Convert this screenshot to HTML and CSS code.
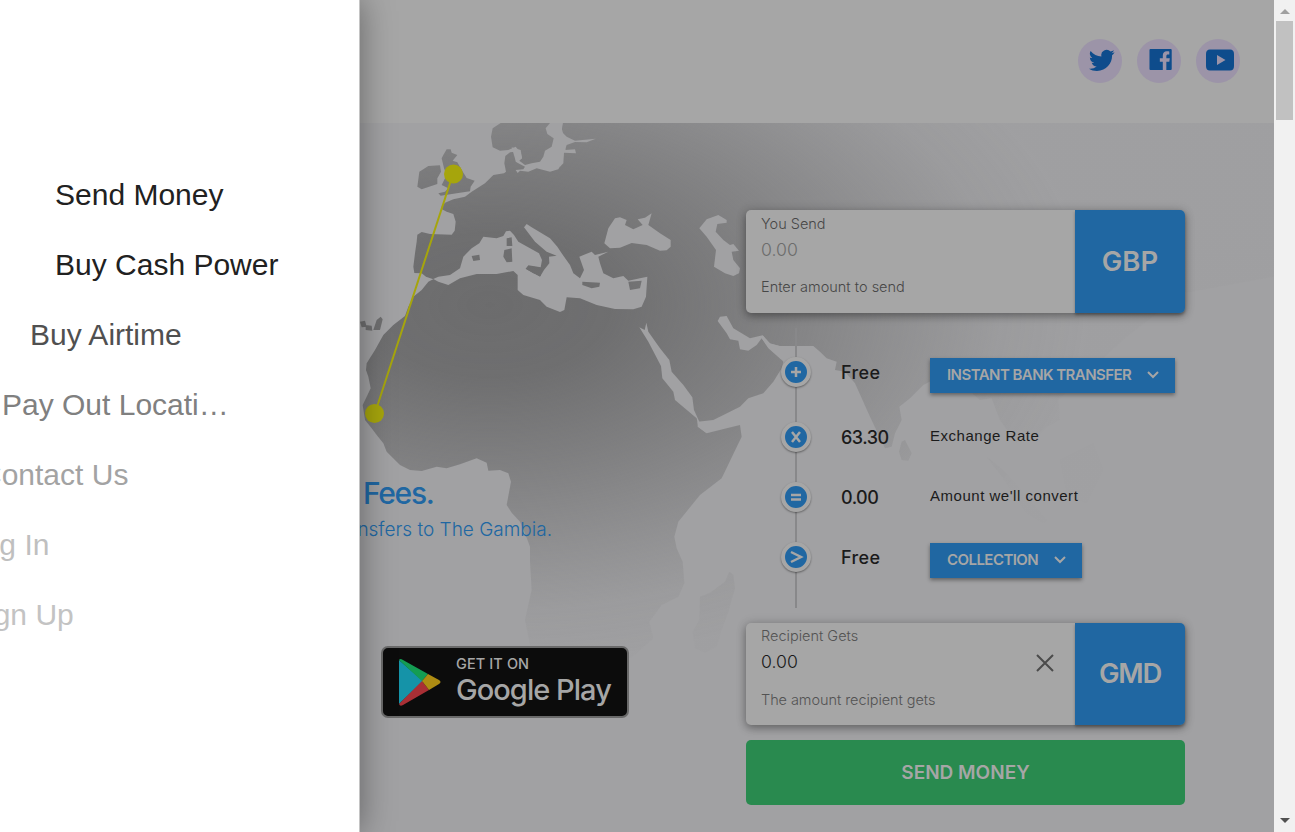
FILE: index.html
```html
<!DOCTYPE html>
<html lang="en">
<head>
<meta charset="utf-8">
<title>Send Money</title>
<link rel="stylesheet" href="styles.css">
</head>
<body>
<div class="page">
  <header class="header">
    <a class="social"><svg width="26" height="26" viewBox="0 0 24 24"><path d="M23.6 4.9c-.9.4-1.800.6-2.800.8 1-.6 1.800-1.600 2.200-2.700-1 .6-2 1-3.100 1.200a4.900 4.900 0 0 0-8.400 4.500C7.500 8.500 3.900 6.600 1.500 3.600a4.900 4.900 0 0 0 1.500 6.600c-.8 0-1.600-.2-2.200-.6 0 2.300 1.600 4.400 3.900 4.900-.7.200-1.500.2-2.200.1.600 2 2.400 3.400 4.600 3.400A9.900 9.900 0 0 1-.2 20c2.200 1.400 4.800 2.200 7.500 2.200 9.100 0 14.300-7.700 14-14.600.9-.700 1.700-1.600 2.300-2.700z"/></svg></a>
    <a class="social"><svg width="23" height="23" viewBox="0 0 24 24"><path fill-rule="evenodd" d="M1.500 1h21.200c.6 0 1 .4 1 1v20c0 .6-.4 1-1 1H18.100v-8.600h3.100l.5-3.600h-3.600V8.500c0-1 .5-1.700 1.800-1.700h1.300V3.700c-.5-.1-1.500-.2-2.600-.2-2.800 0-4.200 1.700-4.200 4.700v2.600h-3.100v3.600h3.100V23H1.500c-.6 0-1-.4-1-1V2c0-.6.400-1 1-1z"/></svg></a>
    <a class="social"><svg width="30" height="24" viewBox="0 0 30 24"><path fill-rule="evenodd" d="M5 1.500h20q4 0 4 4.500v12q0 4.500-4 4.500H5q-4 0-4-4.500V6q0-4.500 4-4.500zM12 7v10l8.500-5z"/></svg></a>
  </header>
  <main class="hero">
    <svg class="map" viewBox="0 123 1274 709" width="1274" height="709">
      <defs>
        <radialGradient id="land" gradientUnits="userSpaceOnUse" cx="0" cy="0" r="1" gradientTransform="translate(490 305) scale(600 360)">
          <stop offset="0" stop-color="#6c6c6d"/>
          <stop offset=".2" stop-color="#6c6c6d" stop-opacity=".95"/>
          <stop offset=".45" stop-color="#6c6c6d" stop-opacity=".63"/>
          <stop offset=".7" stop-color="#6c6c6d" stop-opacity=".29"/>
          <stop offset=".85" stop-color="#6c6c6d" stop-opacity=".1"/>
          <stop offset="1" stop-color="#6c6c6d" stop-opacity=".02"/>
        </radialGradient>
        <mask id="coast" maskUnits="userSpaceOnUse" x="0" y="123" width="1274" height="709">
          <g transform="translate(350 110) scale(.33333)" fill="#fff">
            <!-- Europe -->
            <path d="M638 39 635 55 642 80 660 95 645 105 647 122 640 130 638 155 625 178 600 185 580 180 560 175 535 185 510 182 503 189 497 180 520 178 525 170 505 160 497 155 497 125 480 127 466 138 463 160 468 185 462 190 430 195 405 220 365 245 345 260 310 268 285 278 275 290 276 298 290 305 310 312 317 335 314 362 305 374 240 372 215 366 202 374 200 395 195 430 190 470 193 489 215 490 228 500 250 508 330 560 800 600 800 39z"/>
            <!-- Scandinavia -->
            <path d="M452 39 428 55 423 80 428 112 450 122 475 120 497 110 512 128 516 145 508 152 525 165 545 160 570 155 580 140 585 122 605 110 611 85 592 72 587 55 600 39z"/>
            <!-- Britain and Ireland -->
            <path d="M290 118 280 135 275 145 282 175 290 195 275 225 295 235 285 245 265 250 272 257 320 250 360 244 362 230 374 212 350 204 335 180 322 157 308 152 322 135 305 128 302 118zM235 168 270 166 273 185 262 205 262 222 215 238 202 230 208 185z"/>
          </g>
          <g transform="translate(350 310) scale(.33333)" fill="#fff">
            <!-- Africa and Asia -->
            <path d="M245-90 235-85 215-60 190-40 175-10 165 18 130 45 100 75 75 120 50 160 48 180 55 200 62 235 50 260 38 285 45 330 65 355 80 375 100 400 110 425 150 465 180 480 215 483 260 470 290 475 330 463 380 445 410 458 415 482 450 480 475 490 483 515 470 585 485 608 510 635 525 670 540 710 540 755 545 840 525 930 560 1100 700 1150 860 1030 910 985 898 935 935 885 985 860 1003 820 998 755 980 715 973 680 985 635 1050 555 1115 505 1175 380 1170 345 1130 355 1070 370 1043 350 1043 335 1090 330 1170 290 1195 265 1240 250 1270 215 1295 175 1300 155 1275 125 1255 112 1235 85 1240 78 1255 100 1290 108 1390 108 1410 125 1430 145 1460 155 1455 180 1485 185 1515 220 1560 320 1605 415 1625 410 1635 370 1655 330 1648 290 1680 265 1720 225 1760 205 1850 235 1890 270 1925 265 1950 330 2000 400 2010 360 2060 380 2090 350 2130 330 2125 270 2200 200 2330 80 2500-50 2772-100 2772-561 700-561 700-300z"/>
            <!-- Islands -->
            <path d="M30 35 45 32 50 50 35 52zM47 45 65 47 67 62 47 60zM70 60 80 30 92 20 98 28 90 60zM1665 390 1685 430 1675 452 1655 450 1647 425 1655 395zM1138 785 1150 795 1155 835 1135 905 1115 960 1100 1010 1065 1028 1035 1015 1028 965 1048 930 1050 860 1080 848 1125 815z"/>
            <path fill="#999" d="M1910 440 1960 480 2030 560 2090 630 2080 640 2030 610 1970 520zM2130 450 2230 400 2260 480 2210 580 2150 550z"/>
          </g>
          <g transform="translate(350 110) scale(.33333)" fill="#000">
            <!-- Mediterranean -->
            <path d="M250 507 265 500 300 495 330 475 340 440 365 415 388 400 400 380 440 385 460 378 468 364 480 362 492 375 505 395 540 415 567 430 576 450 572 472 535 466 527 476 570 500 582 480 598 460 597 440 620 437 590 425 555 395 522 352 530 342 545 352 600 385 622 410 635 430 660 465 670 490 690 505 702 480 688 440 725 425 735 435 775 425 745 440 750 460 760 490 790 505 820 498 835 512 870 505 892 500 888 560 875 590 850 598 795 597 740 585 690 565 650 562 643 600 630 606 590 590 570 570 520 555 503 540 503 495 490 483 440 492 380 492 330 505 295 525 265 515z"/>
            <path d="M485 112 512 120 516 145 497 152z"/>
          </g>
          <g transform="translate(350 110) scale(.33333)" fill="#fff">
            <path d="M470 385 485 382 487 408 470 408zM463 420 485 415 487 455 470 457 460 440zM365 438 388 434 390 450 370 453zM527 476 540 468 574 474 572 498 550 490zM697 515 750 518 748 530 725 535 697 525zM835 515 875 512 870 535 840 540z"/>
          </g>
          <g transform="translate(560 110) scale(.33333)" fill="#000">
            <!-- Gulf of Finland, Black Sea, Caspian -->
            <path d="M0 39 8 39 5 65 20 80 45 92 107 86 80 97 45 96 20 105 15 120 45 118 48 130 12 128 10 160 0 170zM180 322 200 330 195 345 220 358 248 345 233 328 255 323 275 310 265 345 300 370 332 390 332 410 320 421 300 422 260 405 215 399 180 413 150 415 133 400 145 355 165 325zM475 315 500 330 500 338 472 342 467 365 490 390 510 405 520 402 537 422 515 425 520 450 540 475 537 490 520 498 495 490 462 470 468 420 440 380 418 355 440 328z"/>
          </g>
          <g transform="translate(560 310) scale(.33333)" fill="#000">
            <!-- Red Sea and Persian Gulf -->
            <path d="M238 52 254 60 259 38 265 65 300 115 328 150 335 185 370 225 397 262 402 300 418 335 440 370 415 350 410 325 345 270 340 245 307 205 303 168 265 95zM480 20 500 18 520 55 570 85 608 76 630 100 665 110 665 150 625 115 605 85 590 105 565 122 540 118 535 92 510 88 500 70 473 33z"/>
          </g>
        </mask>
      </defs>
      <rect x="340" y="123" width="934" height="709" fill="url(#land)" mask="url(#coast)"/>
      <path d="M453 174 375 413" stroke="#a6a50c" stroke-width="2"/>
      <circle cx="453.500" cy="174" r="9.500" fill="#a6a50c"/>
      <circle cx="374.500" cy="413.500" r="9.500" fill="#a6a50c"/>
    </svg>
    <section class="intro">
      <h1>Fees.</h1>
      <p>Transfers to The Gambia.</p>
      <a class="play">
        <svg width="44" height="48" viewBox="0 0 44 48"><path fill="#1593a8" d="M1 2v44l24-23z"/><path fill="#149d53" d="M1 2q1-2 4 0l25 14-6 7z"/><path fill="#a92f35" d="M1 46q1 3 4 1l26-15-7-9z"/><path fill="#ae8c13" d="M30 16l11 6q3 2 0 4l-10 6-7-9z"/></svg>
        <span class="play-text"><small>GET IT ON</small><b>Google Play</b></span>
      </a>
    </section>
    <section class="calc">
      <div class="card send">
        <div class="field"><label>You Send</label><span class="amount muted">0.00</span><span class="hint">Enter amount to send</span></div>
        <div class="currency"><span class="gbp">GBP</span></div>
      </div>
      <div class="steps">
        <div class="step first"><i><svg viewBox="0 0 22 22"><path d="M11 6v10M6 11h10"/></svg></i><b class="free">Free</b><button class="bank"><span>INSTANT BANK TRANSFER</span><svg width="12" height="8" viewBox="0 0 12 8"><path d="M1 1l5 5 5-5"/></svg></button></div>
        <div class="step"><i><svg viewBox="0 0 22 22"><path d="M7 6l8 10M15 6L7 16"/></svg></i><b>63.30</b><span class="note">Exchange Rate</span></div>
        <div class="step"><i><svg viewBox="0 0 22 22"><path d="M6 9h10M6 13.500h10"/></svg></i><b>0.00</b><span class="note">Amount we'll convert</span></div>
        <div class="step"><i><svg viewBox="0 0 22 22"><path d="M6 6l10 5-10 5"/></svg></i><b class="free">Free</b><button class="coll"><span>COLLECTION</span><svg width="12" height="8" viewBox="0 0 12 8"><path d="M1 1l5 5 5-5"/></svg></button></div>
      </div>
      <div class="card receive">
        <div class="field"><label class="dim">Recipient Gets</label><span class="amount">0.00</span><span class="hint dim">The amount recipient gets</span></div>
        <svg class="clear" width="18" height="18" viewBox="0 0 18 18"><path d="M1 1l16 16M17 1L1 17"/></svg>
        <div class="currency"><span>GMD</span></div>
      </div>
      <button class="submit"><span>SEND MONEY</span></button>
    </section>
  </main>
  <nav class="drawer">
    <a class="l1">Send Money</a>
    <a class="l2">Buy Cash Power</a>
    <a class="l3">Buy Airtime</a>
    <a class="l4">Pay Out Locati…</a>
    <a class="l5">Contact Us</a>
    <a class="l6">Log In</a>
    <a class="l7">Sign Up</a>
  </nav>
</div>
<div class="scrollbar"><i class="up"></i><i class="thumb"></i><i class="down"></i></div>
</body>
</html>
```

FILE: styles.css
```css
* { box-sizing: border-box; }
body { margin: 0; display: flex; height: 832px; overflow: hidden; font-family: Inter, "Liberation Sans", sans-serif; }
.page { position: relative; width: 1274px; height: 832px; overflow: hidden; background: #a1a1a3; }
.header { height: 123px; background: #a6a6a6; display: flex; justify-content: flex-end; gap: 15px; padding: 39px 34px 0 0; }
.social { width: 44px; height: 44px; border-radius: 50%; background: #9c94a8; display: flex; justify-content: center; align-items: center; padding: 0 0 3px 3px; fill: #0e4c8c; }
.hero { position: relative; height: 709px; display: flex; justify-content: space-between; padding-right: 89px; }
.map { position: absolute; left: 0; top: 0; }
.intro { position: relative; width: 640px; padding: 352px 0 0 363px; color: #2067a2; }
.intro h1 { margin: 0; font-size: 30px; line-height: 36px; font-weight: 500; letter-spacing: -1.3px; }
.intro p { margin: 6px 0 0 -38px; width: 227px; text-align: right; white-space: nowrap; font-size: 19px; line-height: 26px; font-weight: 300; }
.play { display: flex; width: 248px; height: 72px; margin: 103px 0 0 18px; padding: 12px 0 0 15px; border: 2px solid #6a6a6a; border-radius: 7px; background: #0c0c0c; color: #a6a6a6; }
.play svg { margin-top: -2px; }
.play-text { display: flex; flex-direction: column; margin: -4px 0 0 14px; white-space: nowrap; }
.play small { font: 500 14.500px/16px Inter, sans-serif; letter-spacing: .1px; }
.play b { font: 500 29px/36px Inter, sans-serif; letter-spacing: -.95px; }
.calc { position: relative; width: 439px; padding-top: 87px; }
.card { display: flex; height: 103px; border-radius: 5px; background: #a6a6a6; box-shadow: 0 3px 8px rgba(0,0,0,.35), 0 0 12px rgba(0,0,0,.1); }
.field { flex: 1; display: flex; flex-direction: column; padding: 4px 0 0 15px; color: #474747; font-weight: 300; font-size: 14.500px; line-height: 19px; }
.amount { margin-top: 5px; font-size: 17.700px; line-height: 24px; color: #181818; }
.muted { color: #6c6c6c; }
.dim { color: #535353; }
.hint { margin-top: 15px; }
.currency { width: 110px; background: #2067a2; border-radius: 0 5px 5px 0; display: flex; align-items: center; justify-content: center; padding-bottom: 2px; color: #a6a6a6; font-size: 27.500px; font-weight: 600; letter-spacing: -1.200px; box-shadow: 0 2px 3px rgba(0,0,0,.3); }
.gbp { letter-spacing: 0; }
.steps { margin: 15px 0; height: 280px; background: linear-gradient(#88888a,#88888a) 49px 0 / 2px 100% no-repeat; display: flex; flex-direction: column; padding-top: 25px; }
.step { display: grid; grid-template-columns: 95px 89px 1fr; height: 60px; align-items: start; padding-top: 4px; }
.step.first { height: 65px; }
.step i { margin: 0 0 0 35px; width: 30px; height: 30px; border-radius: 50%; border: 4px solid #a6a6a6; background: #2067a2; box-shadow: 0 1px 2px rgba(0,0,0,.4); }
.step i svg { display: block; width: 22px; height: 22px; fill: none; stroke: #a6a6a6; stroke-width: 2.500; }
.step b { font-size: 18px; line-height: 32px; font-weight: 500; color: #1b1b1b; letter-spacing: -.5px; }
.step .free { letter-spacing: .4px; }
.note { font: 15px/28px "Liberation Sans", sans-serif; letter-spacing: .52px; color: #1b1b1b; }
.step button { margin-top: 1px; height: 35px; border: 0; background: #2067a2; color: #a6a6a6; padding: 0 16px 0 17px; font: 600 15px Inter, sans-serif; letter-spacing: -.55px; display: flex; justify-content: space-between; align-items: center; box-shadow: 0 2px 4px rgba(0,0,0,.4); white-space: nowrap; }
.step button svg { fill: none; stroke: #a6a6a6; stroke-width: 2; margin-top: -1px; }
.step button span { margin-top: -2px; }
.bank { width: 245px; }
.coll { width: 152px; }
.receive { position: relative; height: 102px; }
.receive .field { padding-top: 3px; }
.receive .hint { margin-top: 16px; letter-spacing: -.07px; }
.clear { position: absolute; left: 290px; top: 31px; stroke: #4b4b4b; stroke-width: 2; }
.submit { margin-top: 15px; width: 439px; height: 65px; border: 0; border-radius: 5px; background: #298a4f; color: #a6a6a6; font: 600 19px Inter, sans-serif; letter-spacing: 0; }
.drawer { position: absolute; left: 0; top: 0; width: 360px; height: 832px; background: #fff; border-right: 1px solid #c4c4c4; box-shadow: 0 0 32px rgba(0,0,0,.4); display: flex; flex-direction: column; padding-top: 160px; font: 30px/70px "Liberation Sans", sans-serif; color: #212121; white-space: nowrap; }
.l1, .l2 { margin-left: 55px; }
.l3 { margin-left: 30px; color: #505050; }
.l4 { margin-left: 2px; color: #808080; }
.l5 { margin-left: -20px; color: #a3a3a3; }
.l6 { margin-left: -34px; color: #bfbfbf; }
.l7 { margin-left: -33px; color: #c3c3c3; }
.scrollbar { width: 21px; height: 832px; background: #f1f1f1; display: flex; flex-direction: column; align-items: center; }
.up { margin-top: 9px; border: 5px solid transparent; border-top: 0; border-bottom-color: #a0a0a0; }
.thumb { margin-top: 7px; width: 17px; height: 99px; background: #c1c1c1; }
.down { margin-top: 698px; border: 5px solid transparent; border-bottom: 0; border-top-color: #505050; }
```
